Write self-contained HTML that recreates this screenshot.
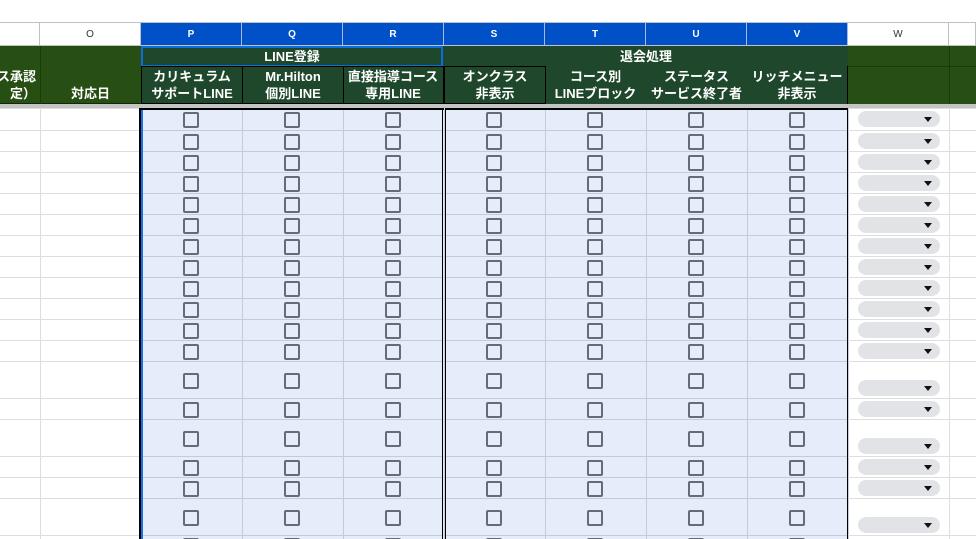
<!DOCTYPE html>
<html style="overflow:hidden;width:976px;height:539px"><head><meta charset="utf-8"><style>
body{margin:0;width:976px;height:539px;overflow:hidden;background:#fff;position:relative;font-family:"Liberation Sans","Noto Sans CJK JP",sans-serif}
div{position:absolute;box-sizing:border-box}
.ch{top:22px;height:24px;font-size:10px;display:flex;align-items:center;justify-content:center;border-right:1px solid #c0c0c0;border-top:1px solid #c0c0c0;border-bottom:1px solid #c0c0c0;color:#333}
.sel{background:#0050c8;color:#fff;font-weight:bold;border-right-color:#a8b8e0}
.g{background:#274e13}
.gg{background:#1e472c}
.t{color:#fff;font-weight:bold;font-size:13px;text-align:center;line-height:17px;display:flex;align-items:center;justify-content:center;white-space:nowrap}
.cb{width:16px;height:16px;border:2px solid #646c7a;border-radius:2px}
.pill{width:82px;height:16px;border-radius:8px;background:#e1e3e6}
.pill:after{content:"";position:absolute;right:8px;top:6px;border-left:4px solid transparent;border-right:4px solid transparent;border-top:5px solid #111}
</style></head><body>
<div class="ch" style="left:0;width:40px"></div>
<div class="ch" style="left:40px;width:101px">O</div>
<div class="ch sel" style="left:141px;width:101px">P</div>
<div class="ch sel" style="left:242px;width:101px">Q</div>
<div class="ch sel" style="left:343px;width:101px">R</div>
<div class="ch sel" style="left:444px;width:101px">S</div>
<div class="ch sel" style="left:545px;width:101px">T</div>
<div class="ch sel" style="left:646px;width:101px">U</div>
<div class="ch sel" style="left:747px;width:101px">V</div>
<div class="ch" style="left:848px;width:101px">W</div>
<div class="ch" style="left:949px;width:27px"></div>
<div class="g" style="left:0;top:46px;width:141px;height:58px;border-bottom:1px solid #0e2a08"></div>
<div style="left:40px;top:46px;width:1px;height:58px;background:#1a3a0c"></div>
<div class="gg" style="left:141px;top:46px;width:707px;height:58px"></div>
<div class="g" style="left:848px;top:46px;width:128px;height:58px"></div>
<div style="left:949px;top:46px;width:1px;height:58px;background:#1a3a0c"></div>
<div style="left:848px;top:66px;width:128px;height:1px;background:#1a3a0c"></div>
<div class="t" style="left:0;top:66px;width:36px;height:38px;justify-content:flex-end;overflow:hidden;text-align:right"><span>ス承認<br>定）</span></div>
<div class="t" style="left:40px;top:83px;width:101px;height:20px">対応日</div>
<div class="t" style="left:141px;top:46px;width:302px;height:21px;border:2px solid #0a6ee0">LINE登録</div>
<div class="t" style="left:444px;top:46px;width:404px;height:20px">退会処理</div>
<div class="t" style="left:141px;top:66px;width:102px;height:38px;border:1px solid #000">カリキュラム<br>サポートLINE</div>
<div class="t" style="left:242px;top:66px;width:102px;height:38px;border:1px solid #000">Mr.Hilton<br>個別LINE</div>
<div class="t" style="left:343px;top:66px;width:101px;height:38px;border:1px solid #000;border-left:0">直接指導コース<br>専用LINE</div>
<div class="t" style="left:444px;top:66px;width:102px;height:38px;border:1px solid #000">オンクラス<br>非表示</div>
<div class="t" style="left:545px;top:66px;width:101px;height:38px">コース別<br>LINEブロック</div>
<div class="t" style="left:646px;top:66px;width:101px;height:38px">ステータス<br>サービス終了者</div>
<div class="t" style="left:747px;top:66px;width:101px;height:38px;border-right:1px solid #000">リッチメニュー<br>非表示</div>
<div style="left:0;top:104px;width:976px;height:4px;background:#c4c4c4"></div>
<div style="left:141px;top:108px;width:707px;height:431px;background:#e5edfb"></div>
<div id="grid"></div>
<div style="left:139px;top:108px;width:2px;height:431px;background:#000"></div>
<div style="left:141px;top:108px;width:2px;height:431px;background:#1a6ee8"></div>
<div style="left:141px;top:108px;width:303px;height:2px;background:#000"></div>
<div style="left:442px;top:108px;width:1px;height:431px;background:#000"></div>
<div style="left:445px;top:108px;width:1px;height:431px;background:#000"></div>
<div style="left:445px;top:108px;width:403px;height:2px;background:#000"></div>
<div style="left:847px;top:108px;width:1px;height:431px;background:#000"></div>
<script>
var tops=[108,130,151,172,193,214,235,256,277,298,319,340,361,398,419,456,477,498,535,539];
var cols=[0,40,141,242,343,444,545,646,747,848,949,976];
var h='';
for(var c=1;c<cols.length-1;c++){var x=cols[c];var col=(x>141&&x<=848)?'#c5ccd9':'#dedede';h+='<div style="left:'+x+'px;top:108px;width:1px;height:431px;background:'+col+'"></div>';}
for(var i=0;i<tops.length-1;i++){var y=tops[i],hh=tops[i+1]-y;
 h+='<div style="left:0;top:'+y+'px;width:141px;height:1px;background:#dedede"></div>';
 h+='<div style="left:141px;top:'+y+'px;width:707px;height:1px;background:#c5ccd9"></div>';
 h+='<div style="left:848px;top:'+y+'px;width:128px;height:1px;background:#dedede"></div>';
 if(hh<10){for(var c=2;c<9;c++){h+='<div class="cb" style="left:'+(cols[c]+42)+'px;top:'+(y+3)+'px"></div>';}continue;}
 var cy=y+Math.round((hh-16)/2)+1;
 for(var c=2;c<9;c++){h+='<div class="cb" style="left:'+(cols[c]+42)+'px;top:'+cy+'px"></div>';}
 var py=hh>25? y+hh-18 : y+3;
 h+='<div class="pill" style="left:858px;top:'+py+'px"></div>';
}
document.getElementById('grid').outerHTML=h;
</script>
</body></html>
